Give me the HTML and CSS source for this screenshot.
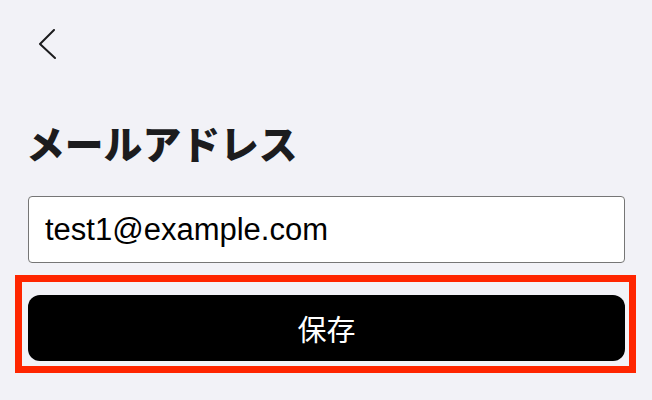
FILE: index.html
```html
<!DOCTYPE html>
<html lang="ja">
<head>
<meta charset="utf-8">
<link rel="stylesheet" href="styles.css">
</head>
<body>
<div class="page">
  <div class="nav">
    <svg class="back" width="18" height="32" viewBox="0 0 18 32">
      <path d="M16 1 L2 15 L17 29" fill="none" stroke="#1c1c1e" stroke-width="2" stroke-linecap="round" stroke-linejoin="round"/>
    </svg>
  </div>
  <h1 class="title">メールアドレス</h1>
  <input class="field" type="email" value="test1@example.com">
  <div class="annot-frame">
    <button class="save" type="button">保存</button>
  </div>
</div>
</body>
</html>
```

FILE: styles.css
```css
html, body {
  margin: 0;
  padding: 0;
  background: #f2f2f7;
}
.page {
  display: flex;
  flex-direction: column;
  padding: 0 27px 0 28px;
}
.nav {
  height: 88px;
  display: flex;
  align-items: flex-start;
}
.back {
  margin-left: 10px;
  margin-top: 29px;
  display: block;
}
.title {
  margin: 35px 0 0 -2px;
  font-family: "Noto Sans CJK JP", sans-serif;
  font-weight: 900;
  font-size: 38.8px;
  line-height: 38px;
  color: #1c1c1e;
  letter-spacing: 0;
}
.field {
  box-sizing: border-box;
  margin: 35px 0 0 0;
  height: 67px;
  width: 100%;
  border: 1.5px solid #767676;
  border-radius: 4px;
  background: #fff;
  padding: 0 0 0 16px;
  font-family: "Liberation Sans", Arial, sans-serif;
  font-size: 31px;
  color: #000;
  outline: none;
}
.annot-frame {
  margin: 12px -11px 0 -13px;
  padding: 13px 4px 5px 6px;
  border: 7px solid #ff2600;
}
.save {
  display: block;
  width: 100%;
  height: 66px;
  border: none;
  border-radius: 12px;
  background: #000;
  color: #fff;
  font-family: "Noto Sans CJK JP", sans-serif;
  font-size: 29px;
  font-weight: 400;
  padding: 0;
}
```
